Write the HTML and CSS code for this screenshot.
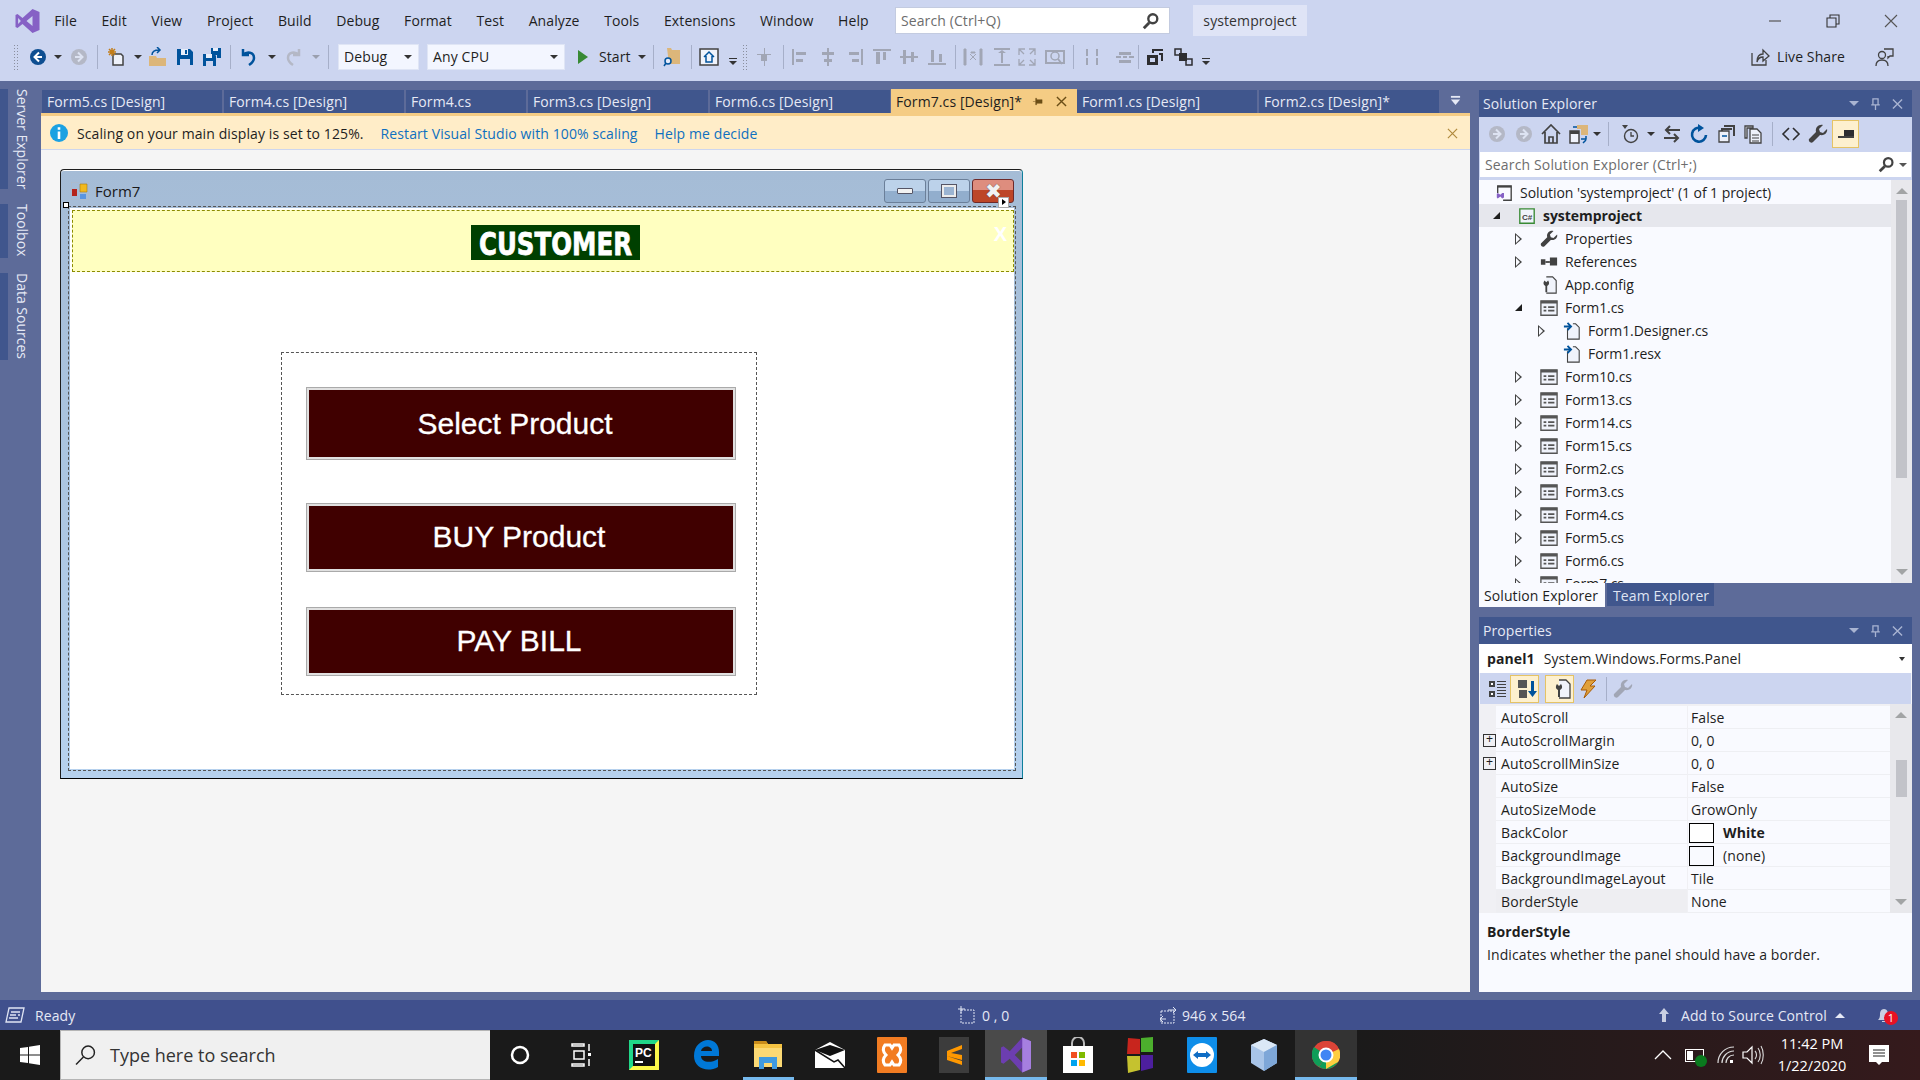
FILE: index.html
```html
<!DOCTYPE html>
<html lang="en">
<head>
    <meta charset="UTF-8">
    <title>systemproject - Microsoft Visual Studio</title>
    <link rel="stylesheet" href="styles.css">
</head>
<body>
    <!-- Shared icons -->
    <svg class="sprite" xmlns="http://www.w3.org/2000/svg">
        <symbol id="i-vs" viewBox="0 0 24 24"><path fill="#8661c5" fill-rule="evenodd" d="M17 0l7 3v18l-7 3-10-9-5 4-2-1V6l2-1 5 4zm0 7l-6 5 6 5zM2.600 9v6l2.800-3z"/></symbol>
        <symbol id="i-back" viewBox="0 0 20 20"><circle cx="10" cy="10" r="8" fill="#0e4e91"/><path d="M11 5.500L6.500 10l4.500 4.500M7 10h7" fill="none" stroke="#fff" stroke-width="2"/></symbol>
        <symbol id="i-fwd" viewBox="0 0 20 20"><circle cx="10" cy="10" r="8" fill="#b4b8c6"/><path d="M9 5.500l4.500 4.500L9 14.500M13 10H6" fill="none" stroke="#dde3f2" stroke-width="2"/></symbol>
        <symbol id="i-new" viewBox="0 0 20 20"><path d="M6 7h8l2 2v9H6z" fill="#eef1fa" stroke="#424242" stroke-width="1.500"/><path d="M5 1v8M1 5h8M2 2l6 6M8 2L2 8" stroke="#c27d1a" stroke-width="1.500"/></symbol>
        <symbol id="i-open" viewBox="0 0 20 20"><path d="M1 9h7l1 2h9v8H1z" fill="#dcb67a"/><path d="M4 8c0-4 3-5 7-5M9 0l3 3-3 3" fill="none" stroke="#00539c" stroke-width="1.500"/></symbol>
        <symbol id="i-save" viewBox="0 0 20 20"><path d="M2 2h13l3 3v13H2z" fill="#00539c"/><path d="M6 2h7v6H6z" fill="#e8eefa"/><path d="M10 3h2v4h-2z" fill="#00539c"/><path d="M5 12h10v6H5z" fill="#cbd5f0"/></symbol>
        <symbol id="i-saveall" viewBox="0 0 20 20"><path d="M9 1h10v10h-4V8H9z" fill="#00539c"/><path d="M1 7h12l1 2v10H1z" fill="#00539c"/><path d="M4 7h6v4H4zM11 1h5v3h-5z" fill="#e8eefa"/><path d="M4 14h7v5H4z" fill="#cbd5f0"/></symbol>
        <symbol id="i-undo" viewBox="0 0 20 20"><path d="M4 2v6h6M4 8c4-4 11-3 11 3 0 3-2 5-5 7" fill="none" stroke="#00539c" stroke-width="2.500"/></symbol>
        <symbol id="i-redo" viewBox="0 0 20 20"><path d="M16 2v6h-6M16 8C12 4 5 5 5 11c0 3 2 5 5 7" fill="none" stroke="#b4b8c6" stroke-width="2.500"/></symbol>
        <symbol id="i-find" viewBox="0 0 20 20"><path d="M4 1h4l1 2h8v14H6z" fill="#dcb67a"/><circle cx="5" cy="14" r="3" fill="#e4eaf8" stroke="#00539c" stroke-width="1.500"/><path d="M3 16l-2 3" stroke="#00539c" stroke-width="1.500"/></symbol>
        <symbol id="i-homebox" viewBox="0 0 20 20"><path d="M1 2h18v16H1z" fill="#f0f3fb" stroke="#424242" stroke-width="1.500"/><path d="M5 10l5-5 5 5M7 9v6h6V9" fill="none" stroke="#00539c" stroke-width="1.500"/></symbol>
        <symbol id="i-align" viewBox="0 0 20 20"><path d="M3 7h14v1H3zM10 1h1v18h-1zM7 8h6v6H7z" fill="#a1a6b5"/></symbol>
        <symbol id="i-al" viewBox="0 0 20 20"><path d="M2 2h2v16H2zM6 5h10v3H6zM6 12h7v3H6z" fill="#a1a6b5"/></symbol>
        <symbol id="i-ac" viewBox="0 0 20 20"><path d="M9 1h2v18H9zM4 5h12v3H4zM6 12h8v3H6z" fill="#a1a6b5"/></symbol>
        <symbol id="i-ar" viewBox="0 0 20 20"><path d="M16 2h2v16h-2zM4 5h10v3H4zM7 12h7v3H7z" fill="#a1a6b5"/></symbol>
        <symbol id="i-at" viewBox="0 0 20 20"><path d="M1 2h18v2H1zM4 5h4v12H4zM11 5h3v8h-3z" fill="#a1a6b5"/></symbol>
        <symbol id="i-am" viewBox="0 0 20 20"><path d="M1 9h18v2H1zM4 3h3v14H4zM12 5h3v10h-3z" fill="#a1a6b5"/></symbol>
        <symbol id="i-ab" viewBox="0 0 20 20"><path d="M1 16h18v2H1zM4 3h3v12H4zM12 7h3v8h-3z" fill="#a1a6b5"/></symbol>
        <symbol id="i-sp1" viewBox="0 0 20 20"><path d="M1 2h2v16H1zM17 2h2v16h-2zM8 5h4v1H8zM7 7l6 6M13 7l-6 6" stroke="#a1a6b5" fill="#a1a6b5"/></symbol>
        <symbol id="i-sp2" viewBox="0 0 20 20"><path d="M2 1h16v2H2zM2 17h16v2H2zM9 4h2v12H9zM6 6l4-3 4 3z" fill="#a1a6b5"/></symbol>
        <symbol id="i-sp3" viewBox="0 0 20 20"><path d="M2 8V2h6M2 2l5 5M12 2h6v6M18 2l-5 5M2 12v6h6M2 18l5-5M18 12v6h-6M18 18l-5-5" fill="none" stroke="#a1a6b5" stroke-width="1.300"/></symbol>
        <symbol id="i-sp4" viewBox="0 0 20 20"><path d="M1 4h18v12H1z" fill="none" stroke="#a1a6b5" stroke-width="2"/><circle cx="10" cy="9" r="4" fill="#ccd5f0" stroke="#a1a6b5" stroke-width="1.500"/><path d="M13 12l4 5" stroke="#a1a6b5" stroke-width="2"/></symbol>
        <symbol id="i-sp5" viewBox="0 0 20 20"><path d="M4 2h2v7H4zM4 11h2v7H4zM14 2h2v7h-2zM14 11h2v7h-2z" fill="#a1a6b5"/></symbol>
        <symbol id="i-sp6" viewBox="0 0 20 20"><path d="M4 5h12v3H4zM1 9h5v2H1zM8 9h4v2H8zM14 9h5v2h-5zM4 13h12v3H4z" fill="#a1a6b5"/></symbol>
        <symbol id="i-tab" viewBox="0 0 20 20"><path d="M7 2h11v2h-9v2H7zM14 6h4v8h-2V8h-2zM2 8h11v10H2zM5 11v4h5v-4z" fill="#2d2d30"/></symbol>
        <symbol id="i-order" viewBox="0 0 20 20"><path d="M2 2h6v6H2zM13 12h6v6h-6z" fill="none" stroke="#2d2d30" stroke-width="1.500"/><path d="M6 6h8v8H6z" fill="#2d2d30"/></symbol>
        <symbol id="i-share" viewBox="0 0 20 20"><path d="M2 6v12h14v-5" fill="none" stroke="#424242" stroke-width="1.300"/><path d="M7 15c0-6 3-8 6-8V3l6 6-6 5v-4c-3 0-5 1-6 5z" fill="none" stroke="#424242" stroke-width="1.300"/></symbol>
        <symbol id="i-feedback" viewBox="0 0 20 20"><circle cx="8" cy="8" r="3.500" fill="none" stroke="#424242" stroke-width="1.300"/><path d="M2 19c0-4 2-6 6-6s6 2 6 6M10 2h9v7h-3l-2 2V9" fill="none" stroke="#424242" stroke-width="1.300"/></symbol>
        <symbol id="i-home" viewBox="0 0 20 20"><path d="M1 10l9-9 9 9M4 8v11h12V8M8 19v-6h4v6" fill="none" stroke="#424242" stroke-width="1.700"/></symbol>
        <symbol id="i-sync" viewBox="0 0 20 20"><path d="M1 7h9v12H1z" fill="#f0f3fb" stroke="#424242" stroke-width="1.500"/><path d="M1 7h9v3H1z" fill="#424242"/><path d="M8 1h11v10h-7V5H8z" fill="#dcb67a"/><path d="M12 15h5v-3M17 16l-3 3M4 3h4" stroke="#00539c" stroke-width="1.500" fill="none"/></symbol>
        <symbol id="i-history" viewBox="0 0 20 20"><circle cx="11" cy="12" r="6.500" fill="none" stroke="#424242" stroke-width="1.400"/><path d="M11 8v4h3" fill="none" stroke="#424242" stroke-width="1.300"/><path d="M2 1h6L5 5z" fill="#424242"/></symbol>
        <symbol id="i-arrows" viewBox="0 0 20 20"><path d="M18 6H4M8 2L4 6l4 4M2 14h14M12 10l4 4-4 4" fill="none" stroke="#424242" stroke-width="2"/></symbol>
        <symbol id="i-refresh" viewBox="0 0 20 20"><path d="M12 4a7 7 0 1 0 5 7" fill="none" stroke="#00539c" stroke-width="2.600"/><path d="M9 0l6 4-6 4z" fill="#00539c"/></symbol>
        <symbol id="i-collapse" viewBox="0 0 20 20"><path d="M7 1h11v11h-2V3H7zM4 4h11v2H6v8H4z" fill="#424242"/><path d="M2 7h10v11H2z" fill="#eef1fa" stroke="#424242" stroke-width="1.300"/><path d="M5 12h5" stroke="#00539c" stroke-width="1.500"/></symbol>
        <symbol id="i-showall" viewBox="0 0 20 20"><path d="M2 2h8v2H4v10H2zM7 5h7l4 4v10H7z" fill="#eef1fa" stroke="#424242" stroke-width="1.300"/><path d="M9 11h7M9 14h7M9 17h7" stroke="#424242"/></symbol>
        <symbol id="i-code" viewBox="0 0 20 20"><path d="M8 4l-6 6 6 6M12 4l6 6-6 6" fill="none" stroke="#2d2d30" stroke-width="1.600"/></symbol>
        <symbol id="i-wrench" viewBox="0 0 20 20"><path d="M19 5l-4 4-3-1-1-3 4-4c-4-1-8 2-7 7L1 15c-1 2 2 5 4 3l7-7c5 1 8-3 7-6z" fill="#424242"/></symbol>
        <symbol id="i-wrench-off" viewBox="0 0 20 20"><path d="M19 5l-4 4-3-1-1-3 4-4c-4-1-8 2-7 7L1 15c-1 2 2 5 4 3l7-7c5 1 8-3 7-6z" fill="#a1a6b5"/></symbol>
        <symbol id="i-preview" viewBox="0 0 20 20"><path d="M8 6h10v7H8z" fill="#2d2d30"/><path d="M2 12h16v2H2z" fill="#424242"/></symbol>
        <symbol id="i-solution" viewBox="0 0 20 20"><path d="M3 10V2h15v16H9" fill="none" stroke="#424242" stroke-width="1.500"/><path d="M3 2h15v2H3z" fill="#424242"/><path d="M8 10l-2 2-3-2-1 1v4l1 1 3-2 2 2 2-1v-5z" fill="#8661c5"/></symbol>
        <symbol id="i-csproj" viewBox="0 0 20 20"><path d="M2 2h16v16H2z" fill="#f0f3fb" stroke="#388a34" stroke-width="1.500"/><text x="10" y="14" font-size="9" font-family="Liberation Sans" font-weight="700" text-anchor="middle" fill="#424242">C#</text></symbol>
        <symbol id="i-ref" viewBox="0 0 20 20"><path d="M1 7h5v6H1zM11 5h8v9h-8z" fill="#424242"/><path d="M6 9h5v2H6z" fill="#424242"/></symbol>
        <symbol id="i-config" viewBox="0 0 20 20"><path d="M7 1h7l4 4v14H7" fill="#f0f3fb" stroke="#424242" stroke-width="1.200"/><path d="M9 5l-2 2-2-2c-2 3-1 5 1 6v7h2v-7c2-1 3-3 1-6z" fill="#424242"/></symbol>
        <symbol id="i-form" viewBox="0 0 20 20"><path d="M1 2h18v16H1z" fill="#f0f3fb" stroke="#555" stroke-width="1.500"/><path d="M1 2h18v3H1z" fill="#555"/><path d="M4 8h3v2H4zM9 8h7v2H9zM4 12h3v2H4zM9 12h7v2H9z" fill="#555"/></symbol>
        <symbol id="i-dep" viewBox="0 0 20 20"><path d="M5 7v12h13V6l-4-4h-3" fill="#f0f3fb" stroke="#424242" stroke-width="1.200"/><path d="M1 5h7M5 1l4 4-4 4" fill="none" stroke="#00539c" stroke-width="2"/></symbol>
        <symbol id="i-cat" viewBox="0 0 20 20"><path d="M1 2h6v6H1zM1 12h6v6H1z" fill="#424242"/><path d="M3 4h2v2H3zM3 14h2v2H3z" fill="#fff"/><path d="M9 2h9v1H9zM9 5h9v1H9zM9 8h9v1H9zM9 11h9v1H9zM9 14h9v1H9zM9 17h9v1H9z" fill="#424242"/></symbol>
        <symbol id="i-az" viewBox="0 0 20 20"><path d="M1 1h9v8H1zM2 11h8v8H2z" fill="#555"/><path d="M14 2h3v10h3l-4.500 6L11 12h3z" fill="#00539c"/></symbol>
        <symbol id="i-props" viewBox="0 0 20 20"><path d="M7 1h7l4 4v14H7" fill="#f0f3fb" stroke="#424242" stroke-width="1.300"/><path d="M9 5L7 7 5 5c-2 3-1 5 1 6v7h2v-7c2-1 3-3 1-6z" fill="#424242"/></symbol>
        <symbol id="i-bolt" viewBox="0 0 20 20"><path d="M9 1h9l-6 6h5L6 19l3-8H3z" fill="#e0a03a" stroke="#a85b06"/></symbol>
        <symbol id="i-winlogo" viewBox="0 0 20 20"><path d="M0 3l8-1v7.500H0zM9 1.800L20 0v9.500H9zM0 10.500h8V18l-8-1zM9 10.500h11V20L9 18.200z" fill="#fff"/></symbol>
        <symbol id="i-search" viewBox="0 0 20 20"><circle cx="12.500" cy="7.500" r="6" fill="none" stroke="currentColor" stroke-width="1.400"/><path d="M8 12l-7 7" stroke="currentColor" stroke-width="1.400"/></symbol>
        <symbol id="i-glass" viewBox="0 0 20 20"><circle cx="12" cy="7.500" r="5" fill="none" stroke="#424242" stroke-width="2.600"/><path d="M8 12l-6 6" stroke="#424242" stroke-width="3.200"/></symbol>
    </svg>

    <!-- Title, menu and toolbar -->
    <header class="top">
        <div class="menubar">
            <svg class="vs-logo"><use href="#i-vs"/></svg>
            <nav class="menu">
                <span>File</span><span>Edit</span><span>View</span><span>Project</span><span>Build</span><span>Debug</span><span>Format</span><span>Test</span><span>Analyze</span><span>Tools</span><span>Extensions</span><span>Window</span><span>Help</span>
            </nav>
            <div class="quick-search">
                <span>Search (Ctrl+Q)</span>
                <svg class="ico"><use href="#i-glass"/></svg>
            </div>
            <div class="project-name">systemproject</div>
            <div class="win-btns">
                <svg viewBox="0 0 14 14"><path d="M1 7h12" stroke="#555" stroke-width="1.200"/></svg>
                <svg viewBox="0 0 14 14"><path d="M1 4h9v9H1zM4 4V1h9v9h-3" fill="none" stroke="#333" stroke-width="1.100"/></svg>
                <svg viewBox="0 0 14 14"><path d="M1 1l12 12M13 1L1 13" stroke="#555" stroke-width="1.100"/></svg>
            </div>
        </div>
        <div class="toolbar">
            <span class="grip"></span>
            <svg class="ico m9"><use href="#i-back"/></svg><span class="dd m6"></span>
            <svg class="ico"><use href="#i-fwd"/></svg>
            <span class="sep m8"></span>
            <svg class="ico m9"><use href="#i-new"/></svg><span class="dd"></span>
            <svg class="ico m6"><use href="#i-open"/></svg>
            <svg class="ico"><use href="#i-save"/></svg>
            <svg class="ico"><use href="#i-saveall"/></svg>
            <span class="sep m8"></span>
            <svg class="ico m8"><use href="#i-undo"/></svg><span class="dd m9"></span>
            <svg class="ico"><use href="#i-redo"/></svg><span class="dd dim m9"></span>
            <span class="sep m8"></span>
            <div class="combo combo-debug m9">Debug<span class="dd"></span></div>
            <div class="combo combo-cpu m8">Any CPU<span class="dd"></span></div>
            <span class="play"></span>
            <span class="start-label">Start</span><span class="dd m1"></span>
            <span class="sep"></span>
            <svg class="ico m9"><use href="#i-find"/></svg>
            <span class="sep m8"></span>
            <svg class="ico"><use href="#i-homebox"/></svg><span class="more m10"></span>
            <span class="grip m5"></span>
            <svg class="ico m6"><use href="#i-align"/></svg>
            <span class="sep m9"></span>
            <svg class="ico m6"><use href="#i-al"/></svg>
            <svg class="ico m8"><use href="#i-ac"/></svg>
            <svg class="ico"><use href="#i-ar"/></svg>
            <svg class="ico"><use href="#i-at"/></svg>
            <svg class="ico"><use href="#i-am"/></svg>
            <svg class="ico m8"><use href="#i-ab"/></svg>
            <span class="sep m8"></span>
            <svg class="ico"><use href="#i-sp1"/></svg>
            <svg class="ico m9"><use href="#i-sp2"/></svg>
            <svg class="ico m5"><use href="#i-sp3"/></svg>
            <svg class="ico m8"><use href="#i-sp4"/></svg>
            <span class="sep m8"></span>
            <svg class="ico m8"><use href="#i-sp5"/></svg>
            <svg class="ico m13"><use href="#i-sp6"/></svg>
            <span class="sep m3"></span>
            <svg class="ico m6"><use href="#i-tab"/></svg>
            <svg class="ico m8"><use href="#i-order"/></svg>
            <span class="more m9"></span>
            <div class="toolbar-right">
                <svg class="ico"><use href="#i-share"/></svg>
                <span class="live-share">Live Share</span>
                <svg class="ico feedback"><use href="#i-feedback"/></svg>
            </div>
        </div>
    </header>

    <div class="main">
        <!-- Collapsed tool windows -->
        <aside class="side-tabs">
            <div class="side-tab tab-server">Server Explorer</div>
            <div class="side-tab tab-toolbox">Toolbox</div>
            <div class="side-tab tab-data">Data Sources</div>
        </aside>

        <!-- Document area -->
        <section class="doc">
            <div class="doc-tabs">
                <div class="doc-tab">Form5.cs [Design]</div>
                <div class="doc-tab">Form4.cs [Design]</div>
                <div class="doc-tab short">Form4.cs</div>
                <div class="doc-tab">Form3.cs [Design]</div>
                <div class="doc-tab">Form6.cs [Design]</div>
                <div class="doc-tab active">
                    <span>Form7.cs [Design]*</span>
                    <svg class="tab-pin" viewBox="0 0 12 12"><path d="M1 6h3M4 2.500h1v7H4zM5 4h6v4H5z" fill="#6b4e16" stroke="#6b4e16" stroke-width=".5"/></svg>
                    <svg class="tab-x" viewBox="0 0 12 12"><path d="M1 1l10 10M11 1L1 11" stroke="#6b4e16" stroke-width="1.500"/></svg>
                </div>
                <div class="doc-tab">Form1.cs [Design]</div>
                <div class="doc-tab">Form2.cs [Design]*</div>
                <svg class="tabs-menu" viewBox="0 0 12 12"><path d="M1 1h10v2H1z" fill="#e6e9f5"/><path d="M1 5h10L6 11z" fill="#e6e9f5"/></svg>
            </div>
            <div class="tab-well"></div>
            <div class="infobar">
                <svg class="info-ico" viewBox="0 0 18 18"><circle cx="9" cy="9" r="9" fill="#1ba1e2"/><path d="M7.700 7.500h2.600V15H7.700zM7.700 3.200h2.600v2.600H7.700z" fill="#fff"/></svg>
                <span>Scaling on your main display is set to 125%.</span>
                <a class="link link-restart">Restart Visual Studio with 100% scaling</a>
                <a class="link link-help">Help me decide</a>
                <svg class="info-x" viewBox="0 0 12 12"><path d="M1 1l10 10M11 1L1 11" stroke="#b08a3e" stroke-width="1.300"/></svg>
            </div>

            <div class="designer">
                <div class="form-window">
                    <div class="form-title">
                        <svg class="form-ico" viewBox="0 0 18 18"><path d="M0 0h18v18H0z" fill="none" stroke="#bbb" stroke-width=".6"/><path d="M9 2h7v8H9z" fill="#f2b91d" stroke="#a9790c" stroke-width=".6"/><path d="M1 7h5v7H1z" fill="#b5231a"/><path d="M9 12h6v5H9z" fill="#5a95e0"/></svg>
                        <span>Form7</span>
                        <div class="form-btns">
                            <span class="fbtn"><i class="g-min"></i></span>
                            <span class="fbtn"><i class="g-max"></i></span>
                            <span class="fbtn fclose">✖</span>
                        </div>
                        <span class="handle"></span>
                        <span class="smart-tag"></span>
                    </div>
                    <div class="form-client">
                        <div class="head-panel">
                            <div class="logo"><span>CUSTOMER</span></div>
                            <div class="head-x">X</div>
                        </div>
                        <div class="panel1">
                            <button class="cmd cmd-select">Select Product</button>
                            <button class="cmd cmd-buy">BUY Product</button>
                            <button class="cmd cmd-pay">PAY BILL</button>
                        </div>
                    </div>
                </div>
            </div>
        </section>

        <!-- Tool windows -->
        <section class="tools">
            <div class="pane-title">
                <span>Solution Explorer</span>
                <div class="pane-btns">
                    <span class="pane-dd"></span>
                    <svg viewBox="0 0 12 14"><path d="M3 1h6v7H3zM1 8h10M6 8v6" fill="none" stroke="#a9b4d2" stroke-width="1.500"/></svg>
                    <svg viewBox="0 0 12 12"><path d="M1 1l10 10M11 1L1 11" stroke="#a9b4d2" stroke-width="1.500"/></svg>
                </div>
            </div>
            <div class="pane-toolbar se-toolbar">
                <svg class="ico"><use href="#i-fwd"/></svg>
                <svg class="ico"><use href="#i-fwd"/></svg>
                <svg class="ico"><use href="#i-home"/></svg>
                <svg class="ico m8"><use href="#i-sync"/></svg><span class="dd m4"></span>
                <span class="sep"></span>
                <svg class="ico m11"><use href="#i-history"/></svg><span class="dd"></span>
                <svg class="ico m7"><use href="#i-arrows"/></svg>
                <svg class="ico"><use href="#i-refresh"/></svg>
                <svg class="ico m8"><use href="#i-collapse"/></svg>
                <svg class="ico m6"><use href="#i-showall"/></svg>
                <span class="sep m9"></span>
                <svg class="ico m8"><use href="#i-code"/></svg>
                <svg class="ico"><use href="#i-wrench"/></svg>
                <span class="toggled preview-btn"><svg class="ico"><use href="#i-preview"/></svg></span>
            </div>
            <div class="se-search">
                <span>Search Solution Explorer (Ctrl+;)</span>
                <svg class="ico se-glass"><use href="#i-glass"/></svg><span class="dd"></span>
            </div>
            <div class="tree-wrap">
                <div class="tree">
                    <div class="row l0"><svg class="ico"><use href="#i-solution"/></svg><span>Solution 'systemproject' (1 of 1 project)</span></div>
                    <div class="row l1 picked"><i class="tri open"></i><svg class="ico"><use href="#i-csproj"/></svg><b>systemproject</b></div>
                    <div class="row l2"><i class="tri"></i><svg class="ico"><use href="#i-wrench"/></svg><span>Properties</span></div>
                    <div class="row l2"><i class="tri"></i><svg class="ico"><use href="#i-ref"/></svg><span>References</span></div>
                    <div class="row l2"><i class="tri none"></i><svg class="ico"><use href="#i-config"/></svg><span>App.config</span></div>
                    <div class="row l2"><i class="tri open"></i><svg class="ico"><use href="#i-form"/></svg><span>Form1.cs</span></div>
                    <div class="row l3"><i class="tri"></i><svg class="ico"><use href="#i-dep"/></svg><span>Form1.Designer.cs</span></div>
                    <div class="row l3"><i class="tri none"></i><svg class="ico"><use href="#i-dep"/></svg><span>Form1.resx</span></div>
                    <div class="row l2"><i class="tri"></i><svg class="ico"><use href="#i-form"/></svg><span>Form10.cs</span></div>
                    <div class="row l2"><i class="tri"></i><svg class="ico"><use href="#i-form"/></svg><span>Form13.cs</span></div>
                    <div class="row l2"><i class="tri"></i><svg class="ico"><use href="#i-form"/></svg><span>Form14.cs</span></div>
                    <div class="row l2"><i class="tri"></i><svg class="ico"><use href="#i-form"/></svg><span>Form15.cs</span></div>
                    <div class="row l2"><i class="tri"></i><svg class="ico"><use href="#i-form"/></svg><span>Form2.cs</span></div>
                    <div class="row l2"><i class="tri"></i><svg class="ico"><use href="#i-form"/></svg><span>Form3.cs</span></div>
                    <div class="row l2"><i class="tri"></i><svg class="ico"><use href="#i-form"/></svg><span>Form4.cs</span></div>
                    <div class="row l2"><i class="tri"></i><svg class="ico"><use href="#i-form"/></svg><span>Form5.cs</span></div>
                    <div class="row l2"><i class="tri"></i><svg class="ico"><use href="#i-form"/></svg><span>Form6.cs</span></div>
                    <div class="row l2"><i class="tri"></i><svg class="ico"><use href="#i-form"/></svg><span>Form7.cs</span></div>
                </div>
                <div class="vscroll tree-scroll"><i class="arrow up"></i><i class="thumb"></i><i class="arrow down"></i></div>
            </div>
            <div class="pane-tabs">
                <div class="pane-tab active">Solution Explorer</div>
                <div class="pane-tab">Team Explorer</div>
            </div>

            <div class="pane-title props-title">
                <span>Properties</span>
                <div class="pane-btns">
                    <span class="pane-dd"></span>
                    <svg viewBox="0 0 12 14"><path d="M3 1h6v7H3zM1 8h10M6 8v6" fill="none" stroke="#a9b4d2" stroke-width="1.500"/></svg>
                    <svg viewBox="0 0 12 12"><path d="M1 1l10 10M11 1L1 11" stroke="#a9b4d2" stroke-width="1.500"/></svg>
                </div>
            </div>
            <div class="props-object">
                <b>panel1</b><span>System.Windows.Forms.Panel</span><i class="dd"></i>
            </div>
            <div class="pane-toolbar props-toolbar">
                <svg class="ico"><use href="#i-cat"/></svg>
                <span class="toggled"><svg class="ico"><use href="#i-az"/></svg></span>
                <span class="toggled m6"><svg class="ico"><use href="#i-props"/></svg></span>
                <svg class="ico m4"><use href="#i-bolt"/></svg>
                <span class="sep m8"></span>
                <svg class="ico m6"><use href="#i-wrench-off"/></svg>
            </div>
            <div class="props-grid-wrap">
                <div class="props-grid">
                    <div class="p-row"><i class="plus none"></i><div class="p-name">AutoScroll</div><div class="p-val">False</div></div>
                    <div class="p-row"><i class="plus"></i><div class="p-name">AutoScrollMargin</div><div class="p-val">0, 0</div></div>
                    <div class="p-row"><i class="plus"></i><div class="p-name">AutoScrollMinSize</div><div class="p-val">0, 0</div></div>
                    <div class="p-row"><i class="plus none"></i><div class="p-name">AutoSize</div><div class="p-val">False</div></div>
                    <div class="p-row"><i class="plus none"></i><div class="p-name">AutoSizeMode</div><div class="p-val">GrowOnly</div></div>
                    <div class="p-row"><i class="plus none"></i><div class="p-name">BackColor</div><div class="p-val"><i class="swatch white"></i><b>White</b></div></div>
                    <div class="p-row"><i class="plus none"></i><div class="p-name">BackgroundImage</div><div class="p-val"><i class="swatch"></i>(none)</div></div>
                    <div class="p-row"><i class="plus none"></i><div class="p-name">BackgroundImageLayout</div><div class="p-val">Tile</div></div>
                    <div class="p-row sel"><i class="plus none"></i><div class="p-name">BorderStyle</div><div class="p-val">None</div></div>
                </div>
                <div class="vscroll props-scroll"><i class="arrow up"></i><i class="thumb"></i><i class="arrow down"></i></div>
            </div>
            <div class="props-desc">
                <b>BorderStyle</b>
                <span>Indicates whether the panel should have a border.</span>
            </div>
        </section>
    </div>

    <footer class="statusbar">
        <svg class="status-ico" viewBox="0 0 20 16"><path d="M4 1h15l-3 14H1z" fill="none" stroke="#dfe4f3" stroke-width="1.300"/><path d="M6 5h9M5 8h6M13 8h2M4 11h9" stroke="#dfe4f3" stroke-width="1.300"/></svg>
        <span class="st-ready">Ready</span>
        <svg class="st-pos-ico" viewBox="0 0 18 18"><path d="M3 4h13v13H3z" fill="none" stroke="#dfe4f3" stroke-dasharray="2 1"/><path d="M3 0v7M0 3h7" stroke="#dfe4f3"/></svg>
        <span class="st-pos">0 , 0</span>
        <svg class="st-size-ico" viewBox="0 0 18 18"><path d="M2 5h13v12H2z" fill="none" stroke="#dfe4f3" stroke-dasharray="2 1"/><path d="M9 4h8M14 1l3 3-3 3M1 13h6M4 10l-3 3 3 3" fill="none" stroke="#dfe4f3"/></svg>
        <span class="st-size">946 x 564</span>
        <svg class="st-up" viewBox="0 0 12 16"><path d="M6 1l5 6H8v8H4V7H1z" fill="#c9cfe2"/></svg>
        <span class="st-source">Add to Source Control</span>
        <i class="st-tri"></i>
        <span class="bell">
            <svg viewBox="0 0 18 18"><path d="M3 14c2-2 2-4 2-6s1-5 4-5 4 3 4 5 0 4 2 6zM7 15h4v1H7z" fill="#c9cfe2"/></svg>
            <i class="badge">1</i>
        </span>
    </footer>

    <footer class="taskbar">
        <div class="start-btn"><svg><use href="#i-winlogo"/></svg></div>
        <div class="task-search"><svg class="ts-ico"><use href="#i-search"/></svg><span>Type here to search</span></div>
        <div class="task-icons">
            <span class="task"><svg width="20" height="20" viewBox="0 0 20 20"><circle cx="10" cy="10" r="8" fill="none" stroke="#fff" stroke-width="2.500"/></svg></span>
            <span class="task"><svg width="22" height="24" viewBox="0 0 22 24"><path d="M1 1h12v2H1zM1 21h12v2H1zM3 8h10v8H3z" fill="none" stroke="#fff" stroke-width="1.500"/><path d="M18 1v7M18 16v7" stroke="#fff" stroke-width="1.500"/><path d="M17 10h3v3h-3z" fill="#fff"/></svg></span>
            <span class="task"><svg width="30" height="30" viewBox="0 0 30 30"><path d="M0 0h30v30H0z" fill="#21d789"/><path d="M0 30L30 0v30z" fill="#fcf84a"/><path d="M4 4h22v22H4z" fill="#111"/><text x="6" y="17" font-size="12" font-weight="700" font-family="Liberation Sans" fill="#fff">PC</text><path d="M6 21h8v2H6z" fill="#fff"/></svg></span>
            <span class="task"><svg width="28" height="32" viewBox="0 0 28 32"><path d="M2 17C2 6 10 1 16 1c7 0 11 5 11 12v4H9c0 6 9 8 17 3v8c-11 6-24 1-24-11zM9 12h11c0-6-10-6-11 0z" fill="#0078d7"/></svg></span>
            <span class="task running"><svg width="28" height="30" viewBox="0 0 28 30"><path d="M0 1h12l2 3h14v23H0z" fill="#f5c342"/><path d="M0 1h12l2 3H0z" fill="#c98c1a"/><path d="M0 8h28v19H0z" fill="#fbd975"/><path d="M5 17h18v12h-5v-6h-8v6H5z" fill="#3f9ae0"/></svg></span>
            <span class="task"><svg width="30" height="26" viewBox="0 0 30 26"><path d="M0 8L15 0l15 8v18H0z" fill="#fff"/><path d="M0 8l19 12 4-2 7 8" fill="none" stroke="#111" stroke-width="1.500"/><path d="M0 8l15 6L30 8l-15-5z" fill="#111"/></svg></span>
            <span class="task"><svg width="30" height="36" viewBox="0 0 30 36"><path d="M1 0h28a1 1 0 0 1 1 1v34a1 1 0 0 1-1 1H1a1 1 0 0 1-1-1V1a1 1 0 0 1 1-1z" fill="#f27c22"/><path d="M8 8h5l2 3 2-3h5c3 4 2 7-1 10 3 3 4 6 1 10h-5l-2-3-2 3H8c-3-4-2-7 1-10-3-3-4-6-1-10z" fill="none" stroke="#fff" stroke-width="3"/></svg></span>
            <span class="task"><svg width="30" height="36" viewBox="0 0 30 36"><path d="M0 0h30v36H0z" fill="#3c3c3c"/><path d="M23 8L8 14v5l15 4v-5L12 16l11-4zM8 23l15 5v-4L8 19z" fill="#ff9800"/></svg></span>
            <span class="task active"><svg width="30" height="36" viewBox="0 0 24 28"><path d="M17 0l7 3v22l-7 3-10-11-5 4-2-1V8l2-1 5 4zm0 8l-6 6 6 6z" fill="#6c3eb0" fill-rule="evenodd"/><path d="M17 0l7 3v22l-7 3V20l0-12z" fill="#a67fe0"/></svg></span>
            <span class="task"><svg width="30" height="36" viewBox="0 0 30 36"><path d="M9 12V6a6 6 0 0 1 12 0v6" fill="none" stroke="#bbb" stroke-width="2"/><path d="M0 9h30v27H0z" fill="#fff"/><path d="M8 15h6v6H8z" fill="#f25022"/><path d="M16 15h6v6h-6z" fill="#7fba00"/><path d="M8 23h6v6H8z" fill="#00a4ef"/><path d="M16 23h6v6h-6z" fill="#ffb900"/></svg></span>
            <span class="task"><svg width="28" height="36" viewBox="0 0 28 36"><path d="M2 1l12 1v15H1z" fill="#c8251d"/><path d="M15 1l12-1v15H15z" fill="#4caf2d"/><path d="M1 19h13v14L2 36z" fill="#c5c22f"/><path d="M15 18h12v13l-12 3z" fill="#4d1f9e"/></svg></span>
            <span class="task"><svg width="30" height="36" viewBox="0 0 30 36"><path d="M1 0h28a1 1 0 0 1 1 1v34a1 1 0 0 1-1 1H1a1 1 0 0 1-1-1V1a1 1 0 0 1 1-1z" fill="#0e8ee9"/><circle cx="15" cy="18" r="12" fill="#fff"/><path d="M6 18l5-4v2h8v-2l5 4-5 4v-2h-8v2z" fill="#0e6cc4"/></svg></span>
            <span class="task"><svg width="26" height="32" viewBox="0 0 26 32"><path d="M13 0l13 6v18l-13 8-13-8V6z" fill="#a9c5e8"/><path d="M13 0l13 6-13 7L0 6z" fill="#dbe8f6"/><path d="M13 13l13-7v18l-13 8z" fill="#7ea7d8"/></svg></span>
            <span class="task active dim-active"><svg width="28" height="28" viewBox="0 0 28 28"><circle cx="14" cy="14" r="14" fill="#db4437"/><path d="M14 14L26 21A14 14 0 0 1 7 26z" fill="#0f9d58"/><path d="M14 14L7 26A14 14 0 0 1 14 0 14 14 0 0 1 27 8z" fill="#db4437"/><path d="M14 14l13-6a14 14 0 0 1-1 13L14 28z" fill="#ffcd40"/><path d="M14 14L2 6a14 14 0 0 0 5 20l7-12z" fill="#0f9d58"/><circle cx="14" cy="14" r="6.500" fill="#4285f4" stroke="#fff" stroke-width="2"/></svg></span>
        </div>
        <div class="tray">
            <svg width="18" height="10" viewBox="0 0 18 10"><path d="M1 9l8-8 8 8" fill="none" stroke="#fff" stroke-width="1.300"/></svg>
            <span class="battery"><i class="batt-fill"></i><i class="batt-plug"></i></span>
            <svg class="wifi" width="18" height="18" viewBox="0 0 18 18"><path d="M1 17C1 8 8 1 17 1M5 17c0-6 5-12 12-12M9 17c0-4 3-8 8-8" fill="none" stroke="#ddd" stroke-width="1.200"/><path d="M13 14h3v3h-3z" fill="#fff"/></svg>
            <svg class="vol" width="22" height="20" viewBox="0 0 22 20"><path d="M1 7h4l5-5v16l-5-5H1z" fill="none" stroke="#fff" stroke-width="1.200"/><path d="M13 6c2 2 2 6 0 8M16 3c3 4 3 10 0 14M19 1c3 5 3 13 0 18" fill="none" stroke="#ddd" stroke-width="1.100"/></svg>
            <div class="clock"><span>11:42 PM</span><span>1/22/2020</span></div>
            <svg class="notif" width="20" height="20" viewBox="0 0 20 20"><path d="M0 0h20v17h-7l-3 3-3-3H0z" fill="#fff"/><path d="M4 5h12M4 8h12M4 11h12" stroke="#222" stroke-width="1"/></svg>
        </div>
    </footer>
</body>
</html>
```

FILE: styles.css
```css
/* Reset */
* {
    box-sizing: border-box;
    margin: 0;
    padding: 0;
}

html, body {
    width: 1920px;
    height: 1080px;
    overflow: hidden;
}

body {
    font-family: "Open Sans", "Noto Sans", sans-serif;
    font-size: 14px;
    letter-spacing: 0.1px;
    color: #1e1e1e;
    background-color: #5d6b99;
    display: flex;
    flex-direction: column;
}

i {
    font-style: normal;
}

.sprite {
    display: none;
}

.ico {
    width: 20px;
    height: 20px;
    flex: none;
    margin-left: 7px;
}

/* left margins for toolbar items */
.m1 { margin-left: 1px; }
.m3 { margin-left: 3px; }
.m4 { margin-left: 4px; }
.m5 { margin-left: 5px; }
.m6 { margin-left: 6px; }
.m7 { margin-left: 7px; }
.m8 { margin-left: 8px; }
.m9 { margin-left: 9px; }
.m10 { margin-left: 10px; }
.m11 { margin-left: 11px; }
.m13 { margin-left: 13px; }

/* Header */
.top {
    height: 81px;
    background-color: #ccd5f0;
    flex: none;
}

.menubar {
    height: 41px;
    display: flex;
    align-items: center;
    position: relative;
}

.vs-logo {
    width: 25px;
    height: 24px;
    margin-left: 15px;
    flex: none;
}

.menu {
    display: flex;
    margin-left: 2px;
    width: 853px;
}

.menu span {
    padding: 0 12.300px;
    line-height: 20px;
}

.quick-search {
    width: 275px;
    height: 27px;
    background-color: #fff;
    border: 1px solid #c3cbe0;
    display: flex;
    align-items: center;
    justify-content: space-between;
    padding-left: 5px;
    color: #6d6d6d;
}

.quick-search .ico {
    width: 18px;
    height: 18px;
    margin-right: 9px;
}

.project-name {
    width: 114px;
    height: 31px;
    margin-left: 23px;
    background-color: #dfe4f6;
    line-height: 31px;
    text-align: center;
    color: #333;
}

.win-btns {
    margin-left: auto;
    display: flex;
    gap: 44px;
    margin-right: 22px;
}

.win-btns svg {
    width: 14px;
    height: 14px;
}

.toolbar {
    height: 40px;
    display: flex;
    align-items: center;
    padding-bottom: 9px;
}

.grip {
    width: 6px;
    height: 26px;
    flex: none;
    margin-left: 13px;
    background-image: radial-gradient(#8a8f9e 40%, transparent 45%);
    background-size: 3px 3px;
}

.grip.m5 { margin-left: 5px; }

.dd {
    width: 0;
    height: 0;
    flex: none;
    border-left: 4px solid transparent;
    border-right: 4px solid transparent;
    border-top: 4px solid #333;
    margin-left: 7px;
}

.dd.m1 { margin-left: 1px; }
.dd.m4 { margin-left: 4px; }
.dd.m6 { margin-left: 6px; }
.dd.m9 { margin-left: 9px; }

.dd.dim {
    border-top-color: #9a9fae;
}

.more {
    width: 8px;
    height: 7px;
    flex: none;
    margin-top: 9px;
    border-top: 1px solid #333;
    position: relative;
}

.more::after {
    content: "";
    position: absolute;
    left: 0;
    top: 2px;
    border-left: 4px solid transparent;
    border-right: 4px solid transparent;
    border-top: 4px solid #333;
}

.sep {
    width: 1px;
    height: 24px;
    flex: none;
    background-color: #a6afc9;
    margin-left: 7px;
}

.sep.m3 { margin-left: 3px; }
.sep.m8 { margin-left: 8px; }
.sep.m9 { margin-left: 9px; }

.combo {
    height: 26px;
    flex: none;
    background-color: #f3f6ff;
    border: 1px solid #dfe5f5;
    display: flex;
    align-items: center;
    justify-content: space-between;
    padding: 0 6px 0 5px;
}

.combo-debug { width: 81px; }
.combo-cpu { width: 138px; }

.play {
    width: 0;
    height: 0;
    flex: none;
    margin-left: 13px;
    border-left: 10px solid #388a34;
    border-top: 7px solid transparent;
    border-bottom: 7px solid transparent;
}

.start-label {
    width: 38px;
    margin-left: 11px;
    flex: none;
}

.toolbar-right {
    margin-left: auto;
    display: flex;
    align-items: center;
    margin-right: 26px;
}

.live-share {
    margin-left: 7px;
}

.feedback {
    margin-left: 29px;
}

/* Main area */
.main {
    height: 919px;
    flex: none;
    display: flex;
    padding-top: 9px;
}

.side-tabs {
    width: 41px;
    flex: none;
    display: flex;
    flex-direction: column;
}

.side-tab {
    writing-mode: vertical-rl;
    white-space: nowrap;
    width: 31px;
    border-left: 8px solid #40568d;
    padding-left: 5px;
    color: #e6e9f5;
    font-size: 14px;
    line-height: 18px;
    letter-spacing: 0;
}

.tab-server { height: 100px; margin-top: -1px; }
.tab-toolbox { height: 54px; margin-top: 15px; }
.tab-data { height: 87px; margin-top: 15px; }

.doc {
    width: 1429px;
    flex: none;
    display: flex;
    flex-direction: column;
}

.doc-tabs {
    height: 23px;
    display: flex;
    padding-left: 1px;
    gap: 2px;
    flex: none;
}

.doc-tab {
    width: 180px;
    flex: none;
    background-color: #40568d;
    color: #e6e9f5;
    padding-left: 5px;
    line-height: 23px;
    white-space: nowrap;
}

.doc-tab.short {
    width: 120px;
}

.doc-tab.active {
    width: 186px;
    margin: -1px 0 0 -1px;
    height: 24px;
    background-color: #f5cc84;
    color: #1e1e1e;
    display: flex;
    align-items: center;
}

.doc-tab.active + .doc-tab {
    margin-left: -2px;
}

.tab-pin {
    width: 11px;
    height: 11px;
    margin-left: 10px;
}

.tab-x {
    width: 11px;
    height: 11px;
    margin-left: 13px;
}

.tabs-menu {
    width: 11px;
    height: 11px;
    margin: 5px 0 0 9px;
}

.tab-well {
    height: 3px;
    background-color: #f5cc84;
    flex: none;
}

.infobar {
    height: 34px;
    flex: none;
    background-color: #ffedc8;
    border-bottom: 1px solid #cdd6ee;
    display: flex;
    align-items: center;
    padding-top: 1px;
}

.info-ico {
    width: 18px;
    height: 18px;
    margin: 0 9px 0 9px;
    flex: none;
}

.link {
    color: #0e70c0;
}

.link-restart { margin-left: 17px; }
.link-help { margin-left: 17px; }

.info-x {
    width: 11px;
    height: 11px;
    margin-left: auto;
    margin-right: 12px;
}

.designer {
    height: 842px;
    flex: none;
    background-color: #f5f5f5;
    padding: 19px 0 0 19px;
}

/* Form being designed */
.form-window {
    width: 963px;
    height: 610px;
    background: linear-gradient(#a5bcd6 0, #a9c3de 40%, #b6d1ee 100%);
    border: 1px solid #1d1d1d;
    border-bottom-color: #000;
    border-right-color: #0e7f9b;
    border-radius: 4px 4px 0 0;
    box-shadow: inset 0 1px 0 #fff;
    padding: 0 8px 9px 9px;
    display: flex;
    flex-direction: column;
}

.form-title {
    height: 38px;
    flex: none;
    display: flex;
    align-items: center;
    position: relative;
    padding-top: 4px;
    letter-spacing: 0;
    color: #1a1a1a;
    font-size: 15px;
}

.form-ico {
    width: 18px;
    height: 18px;
    margin: 0 6px 0 1px;
}

.form-btns {
    margin-left: auto;
    margin-top: -1px;
    display: flex;
    gap: 2px;
}

.fbtn {
    width: 42px;
    height: 24px;
    border: 1px solid #6b7f99;
    border-radius: 3px;
    background: linear-gradient(#bcd2ea 0 48%, #92aecd 48% 100%);
    display: flex;
    align-items: center;
    justify-content: center;
}

.g-min {
    width: 16px;
    height: 6px;
    background-color: #f2f2f2;
    border: 1px solid #556;
    border-radius: 1px;
}

.g-max {
    width: 16px;
    height: 14px;
    background-color: #9bb4d2;
    border: 3px solid #ececec;
    outline: 1px solid #556;
    outline-offset: -1px;
}

.fclose {
    border-color: #6e2a2a;
    background: linear-gradient(#de8d7e 0 45%, #bd4628 45% 100%);
    color: #f2f2f2;
    font-size: 20px;
    text-shadow: 0 0 1px #333;
    line-height: 1;
}

.handle {
    position: absolute;
    left: -7px;
    bottom: 0;
    width: 6px;
    height: 6px;
    background-color: #fff;
    border: 1px solid #000;
}

.smart-tag {
    position: absolute;
    right: 5px;
    bottom: 0;
    width: 11px;
    height: 11px;
    background: #fff;
    border: 1px solid #aaa;
}

.smart-tag::after {
    content: "";
    position: absolute;
    left: 3px;
    top: 1px;
    border-left: 4px solid #000;
    border-top: 3px solid transparent;
    border-bottom: 3px solid transparent;
}

.form-client {
    flex: 1;
    background-color: #fff;
    outline: 1px dashed #555;
    outline-offset: 1px;
    padding: 2px 0 0 2px;
    letter-spacing: 0;
}

.head-panel {
    height: 62px;
    background-color: #ffffc0;
    border: 1px dashed #8c8c00;
    display: flex;
    align-items: flex-start;
}

.logo {
    width: 169px;
    height: 35px;
    margin: 14px 0 0 398px;
    background-color: #004000;
    color: #fff;
    font-family: "DejaVu Sans", sans-serif;
    font-weight: 700;
    font-size: 24.500px;
    line-height: 39px;
    text-align: center;
    -webkit-text-stroke: 0.6px #fff;
}

.logo span {
    display: inline-block;
    transform: scaleY(1.27);
}

.head-x {
    margin: 12px 6px 0 auto;
    color: #fff;
    font-family: "Liberation Sans", sans-serif;
    font-weight: 700;
    font-size: 20px;
}

.panel1 {
    width: 476px;
    height: 343px;
    margin: 80px 0 0 209px;
    border: 1px dashed #555;
    padding: 34px 0 0 24px;
    display: flex;
    flex-direction: column;
}

.cmd {
    width: 430px;
    height: 69px;
    flex: none;
    background-color: #400000;
    border: 1px solid #aaa;
    outline: 2px solid #e0e0e0;
    outline-offset: -3px;
    color: #fff;
    font-family: "Liberation Sans", sans-serif;
    font-size: 30px;
    -webkit-text-stroke: 0.3px #fff;
}

.cmd-select {
    height: 73px;
    padding-right: 12px;
}

.cmd-buy {
    margin-top: 43px;
    padding: 0 4px 2px 0;
}

.cmd-pay {
    margin-top: 35px;
    padding: 0 4px 2px 0;
}

/* Tool windows */
.tools {
    width: 433px;
    margin-left: 9px;
    flex: none;
    display: flex;
    flex-direction: column;
}

.pane-title {
    height: 27px;
    flex: none;
    background-color: #40568d;
    color: #e6e9f5;
    display: flex;
    align-items: center;
    justify-content: space-between;
    padding: 0 9px 0 4px;
}

.pane-btns {
    display: flex;
    align-items: center;
    gap: 11px;
}

.pane-btns svg {
    width: 11px;
    height: 12px;
}

.pane-dd {
    width: 0;
    height: 0;
    border-left: 5px solid transparent;
    border-right: 5px solid transparent;
    border-top: 5px solid #a9b4d2;
}

.pane-toolbar {
    background-color: #ccd5f0;
    display: flex;
    align-items: center;
    flex: none;
}

.se-toolbar {
    height: 34px;
    padding-left: 1px;
}

.toggled {
    display: flex;
    align-items: center;
    justify-content: center;
    flex: none;
    background-color: #fdf0cf;
    border: 1px solid #e5c365;
}

.toggled .ico {
    margin-left: 0;
}

.preview-btn {
    width: 27px;
    height: 28px;
    margin-left: 4px;
}

.se-search {
    height: 26px;
    flex: none;
    background-color: #fff;
    border: 1px solid #ccd5f0;
    border-width: 1px 1px 0;
    display: flex;
    align-items: center;
    padding-left: 5px;
    color: #6d6d6d;
    letter-spacing: 0.15px;
}

.se-glass {
    width: 17px;
    height: 17px;
    margin-left: auto;
}

.se-search .dd {
    margin: 0 4px 0 4px;
    border-top-color: #555;
}

.tree-wrap {
    height: 406px;
    flex: none;
    border-top: 3px solid #ccd5f0;
    background-color: #f9faff;
    display: flex;
}

.tree {
    width: 412px;
    flex: none;
    overflow: hidden;
    padding-top: 1px;
    letter-spacing: -0.05px;
}

.row {
    height: 23px;
    display: flex;
    align-items: center;
    white-space: nowrap;
}

.row .ico {
    width: 18px;
    height: 18px;
    margin: 0 7px 0 0;
}

.row.picked {
    background-color: #e6e7ed;
}

.row.l0 { padding-left: 16px; }
.row.l1 { padding-left: 14px; }
.row.l2 { padding-left: 36px; }
.row.l3 { padding-left: 59px; }

.tri {
    width: 0;
    height: 0;
    flex: none;
    margin-right: 18px;
    border-left: 7px solid #424242;
    border-top: 6px solid transparent;
    border-bottom: 6px solid transparent;
    position: relative;
}

.tri::after {
    content: "";
    position: absolute;
    left: -6px;
    top: -4px;
    border-left: 4px solid #f9faff;
    border-top: 4px solid transparent;
    border-bottom: 4px solid transparent;
}

.tri.open {
    border-left: 7px solid transparent;
    border-top: 0 solid transparent;
    border-bottom: 7px solid #1e1e1e;
    margin-right: 18px;
}

.tri.open::after {
    display: none;
}

.tri.none {
    visibility: hidden;
}

.vscroll {
    width: 21px;
    flex: none;
    background-color: #e8e8ec;
    display: flex;
    flex-direction: column;
    align-items: center;
}

.arrow {
    width: 0;
    height: 0;
    flex: none;
    border-left: 6px solid transparent;
    border-right: 6px solid transparent;
}

.arrow.up {
    border-bottom: 6px solid #a2a4a5;
    margin-top: 8px;
}

.arrow.down {
    border-top: 6px solid #a2a4a5;
    margin-top: auto;
    margin-bottom: 8px;
}

.thumb {
    width: 11px;
    flex: none;
    background-color: #c2c3c9;
}

.tree-scroll .thumb {
    height: 278px;
    margin-top: 6px;
}

.pane-tabs {
    height: 24px;
    flex: none;
    display: flex;
    gap: 2px;
}

.pane-tab {
    padding: 0 5px;
    line-height: 25px;
    background-color: #40568d;
    color: #dfe4f3;
    white-space: nowrap;
}

.pane-tab.active {
    width: 126px;
    background-color: #f9faff;
    color: #1e1e1e;
}

.pane-tab:last-child {
    width: 107px;
    height: 23px;
    padding-left: 6px;
}

.props-title {
    margin-top: 10px;
}

.props-object {
    height: 29px;
    flex: none;
    background-color: #fff;
    display: flex;
    align-items: center;
    padding: 0 7px 0 8px;
}

.props-object span {
    margin-left: 9px;
}

.props-object .dd {
    margin-left: auto;
    border-width: 4px 3.500px 0;
}

.props-toolbar {
    height: 31px;
    padding-left: 1px;
    border: 1px solid #f4f5fa;
    border-width: 0 1px;
}

.props-toolbar .toggled {
    width: 29px;
    height: 28px;
}

.props-toolbar .ico:first-child {
    margin-left: 7px;
    margin-right: 2px;
}

.props-grid-wrap {
    height: 209px;
    flex: none;
    background-color: #f0f0f4;
    display: flex;
    padding-top: 2px;
}

.props-grid {
    width: 411px;
    flex: none;
}

.p-row {
    height: 23px;
    display: flex;
    align-items: stretch;
    white-space: nowrap;
}

.plus {
    width: 17px;
    flex: none;
    position: relative;
}

.plus::before {
    content: "+";
    position: absolute;
    left: 4px;
    top: 5px;
    width: 11px;
    height: 11px;
    border: 1px solid #333;
    font: 12px/8px "Liberation Sans", sans-serif;
    text-align: center;
    letter-spacing: 0;
}

.plus.none::before {
    display: none;
}

.p-name {
    width: 191px;
    flex: none;
    background-color: #f9faff;
    border-bottom: 1px solid #eeeff3;
    padding-left: 5px;
    line-height: 23px;
}

.p-val {
    width: 203px;
    flex: none;
    margin-left: 1px;
    background-color: #f9faff;
    border-bottom: 1px solid #eeeff3;
    padding: 1px 0 0 3px;
    line-height: 22px;
    display: flex;
    align-items: center;
}

.p-row.sel .p-name {
    background-color: #eeeef2;
}

.swatch {
    width: 25px;
    height: 20px;
    flex: none;
    margin: 0 9px 0 -2px;
    border: 1px solid #000;
}

.swatch.white {
    background-color: #fff;
}

.props-scroll {
    width: 22px;
    margin-top: -2px;
}

.props-scroll .thumb {
    height: 37px;
    margin-top: 42px;
}

.props-desc {
    flex: 1;
    background-color: #f9faff;
    padding: 9px 8px;
    display: flex;
    flex-direction: column;
    gap: 4px;
    margin-bottom: 8px;
}

/* Status bar */
.statusbar {
    height: 30px;
    flex: none;
    background-color: #40508d;
    color: #e6e9f5;
    display: flex;
    align-items: center;
}

.status-ico {
    width: 20px;
    height: 16px;
    margin-left: 5px;
    flex: none;
}

.st-ready { margin-left: 10px; width: 923px; }
.st-pos-ico { width: 18px; height: 18px; flex: none; }
.st-pos { margin-left: 6px; width: 177px; }
.st-size-ico { width: 18px; height: 18px; flex: none; }
.st-size { margin-left: 5px; width: 476px; }

.st-up {
    width: 12px;
    height: 16px;
    flex: none;
}

.st-source { margin-left: 11px; }

.st-tri {
    margin-left: 8px;
    border-left: 5px solid transparent;
    border-right: 5px solid transparent;
    border-bottom: 5px solid #e6e9f5;
}

.bell {
    position: relative;
    margin-left: 30px;
    width: 18px;
    height: 18px;
}

.bell svg {
    width: 18px;
    height: 18px;
}

.badge {
    position: absolute;
    left: 9px;
    top: 5px;
    width: 14px;
    height: 14px;
    border-radius: 50%;
    background-color: #e81123;
    color: #fff;
    font-size: 11px;
    line-height: 14px;
    text-align: center;
    letter-spacing: 0;
}

/* Windows taskbar */
.taskbar {
    height: 50px;
    flex: none;
    background: linear-gradient(90deg, #1a1a1a 0, #1a1a1a 70%, #351a1c 100%);
    display: flex;
    color: #fff;
}

.start-btn {
    width: 60px;
    flex: none;
    display: flex;
    align-items: center;
    justify-content: center;
}

.start-btn svg {
    width: 20px;
    height: 20px;
}

.task-search {
    width: 430px;
    flex: none;
    background-color: #f0f0f0;
    border: 1px solid #b5b5b5;
    border-width: 1px 0 1px 1px;
    display: flex;
    align-items: center;
    padding: 0 0 1px 14px;
    color: #333;
    font-size: 18px;
    letter-spacing: 0;
}

.ts-ico {
    width: 21px;
    height: 24px;
    margin-right: 14px;
    color: #222;
}

.task-icons {
    display: flex;
    margin-left: -1px;
}

.task {
    width: 62px;
    height: 50px;
    flex: none;
    display: flex;
    align-items: center;
    justify-content: center;
}

.task.running {
    background: linear-gradient(#76b9ed, #76b9ed) center bottom / 51px 3px no-repeat;
}

.task.active {
    background-color: #4a4a4a;
    border-bottom: 3px solid #76b9ed;
    padding-top: 3px;
}

.task.dim-active {
    background-color: #333;
}

.tray {
    margin-left: auto;
    display: flex;
    align-items: center;
    padding-right: 31px;
    font-size: 14.500px;
    letter-spacing: 0;
}

.battery {
    width: 19px;
    height: 13px;
    margin-left: 13px;
    border: 1px solid #fff;
    position: relative;
    display: block;
}

.batt-fill {
    position: absolute;
    left: 1px;
    top: 1px;
    width: 6px;
    height: 9px;
    background-color: #fff;
}

.batt-plug {
    position: absolute;
    right: -4px;
    bottom: -6px;
    width: 12px;
    height: 12px;
    border-radius: 50%;
    background-color: #0a7a1e;
}

.wifi { margin-left: 13px; }
.vol { margin-left: 7px; }

.clock {
    display: flex;
    flex-direction: column;
    align-items: center;
    gap: 4px;
    width: 80px;
    margin-left: 8px;
    line-height: 18px;
}

.notif {
    margin-left: 17px;
}
```
